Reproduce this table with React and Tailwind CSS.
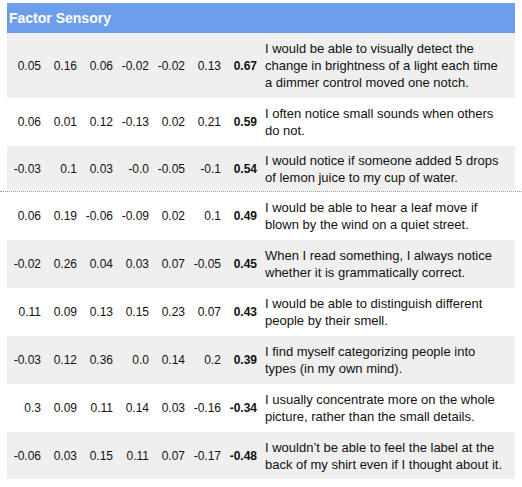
import React from "react";

const rows = [
  { nums: ["0.05", "0.16", "0.06", "-0.02", "-0.02", "0.13"], load: "0.67", text: "I would be able to visually detect the change in brightness of a light each time a dimmer control moved one notch.", h: "h-[65px]" },
  { nums: ["0.06", "0.01", "0.12", "-0.13", "0.02", "0.21"], load: "0.59", text: "I often notice small sounds when others do not.", h: "h-[48px]" },
  { nums: ["-0.03", "0.1", "0.03", "-0.0", "-0.05", "-0.1"], load: "0.54", text: "I would notice if someone added 5 drops of lemon juice to my cup of water.", h: "h-[45px]", divider: true },
  { nums: ["0.06", "0.19", "-0.06", "-0.09", "0.02", "0.1"], load: "0.49", text: "I would be able to hear a leaf move if blown by the wind on a quiet street.", h: "h-[48px]" },
  { nums: ["-0.02", "0.26", "0.04", "0.03", "0.07", "-0.05"], load: "0.45", text: "When I read something, I always notice whether it is grammatically correct.", h: "h-[48px]" },
  { nums: ["0.11", "0.09", "0.13", "0.15", "0.23", "0.07"], load: "0.43", text: "I would be able to distinguish different people by their smell.", h: "h-[48px]" },
  { nums: ["-0.03", "0.12", "0.36", "0.0", "0.14", "0.2"], load: "0.39", text: "I find myself categorizing people into types (in my own mind).", h: "h-[48px]" },
  { nums: ["0.3", "0.09", "0.11", "0.14", "0.03", "-0.16"], load: "-0.34", text: "I usually concentrate more on the whole picture, rather than the small details.", h: "h-[48px]" },
  { nums: ["-0.06", "0.03", "0.15", "0.11", "0.07", "-0.17"], load: "-0.48", text: "I wouldn\u2019t be able to feel the label at the back of my shirt even if I thought about it.", h: "h-[47px]" },
];

function Row({ row, index }) {
  const shade = index % 2 === 0 ? "bg-[#efefef]" : "bg-white";
  return (
    <div className={`mx-[7px] grid grid-cols-[repeat(7,36px)_1fr] ${row.h} ${shade}`}>
      {row.nums.map((n, i) => (
        <div key={i} className="flex items-center justify-end pr-[2px] text-[12px]">
          {n}
        </div>
      ))}
      <div className="flex items-center justify-end pr-[2px] text-[12px] font-bold">{row.load}</div>
      <div className="flex items-center pl-[6px] pr-[10px] text-[13px] leading-[17px]">{row.text}</div>
    </div>
  );
}

export default function App() {
  return (
    <div className="h-[487px] w-[522px] bg-white pt-[3px] font-['Liberation_Sans',Arial,sans-serif] text-[#111]">
      <div className="mx-[7px] flex h-[30px] items-center bg-[#6d9eeb] pl-[2px] text-[14px] font-bold text-white">
        Factor Sensory
      </div>
      {rows.map((row, i) => (
        <React.Fragment key={i}>
          <Row row={row} index={i} />
          {row.divider && <div className="border-t border-dotted border-[#999]" />}
        </React.Fragment>
      ))}
    </div>
  );
}
